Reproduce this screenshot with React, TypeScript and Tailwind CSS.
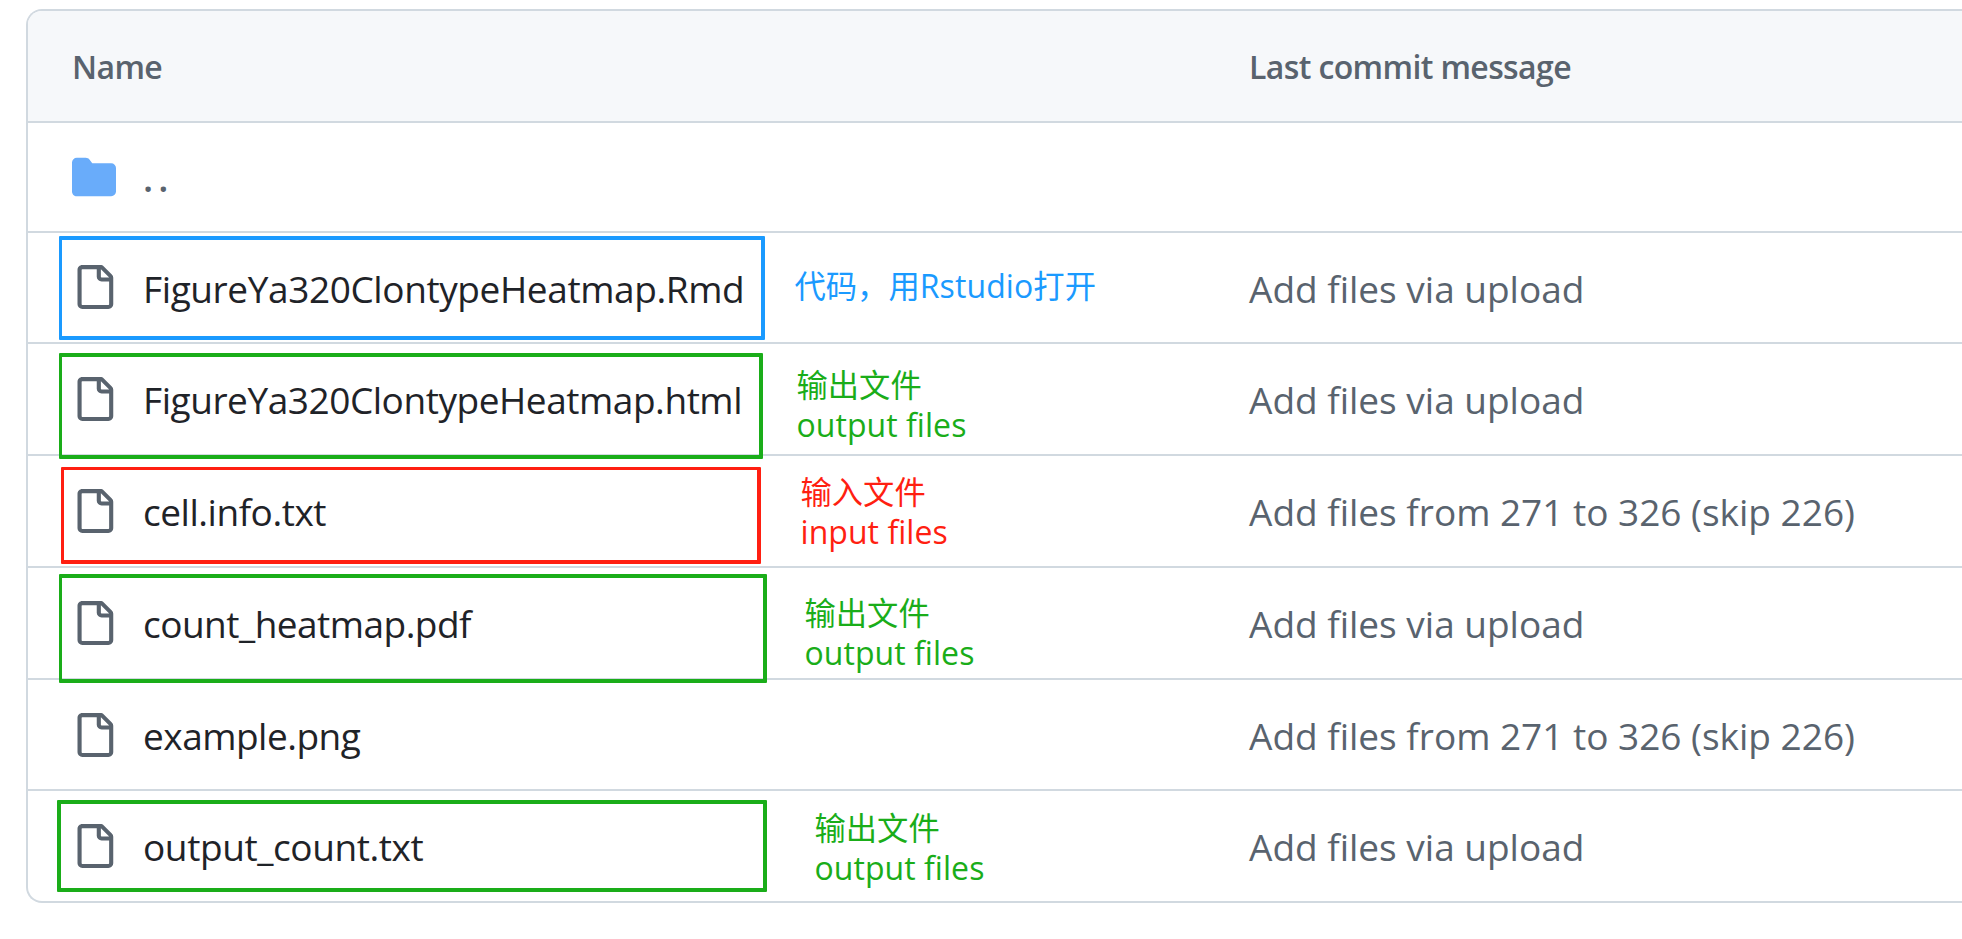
import React, { type ReactNode } from 'react';

type Row = {
  name: string;
  tracking: string;
  message: string;
  height: string;
  textPad: string;
  iconPad: string;
  frame?: string;
  note?: ReactNode;
  notePad?: string;
};

const UPLOAD = 'Add files via upload';
const RANGE = 'Add files from 271 to 326 (skip 226)';

const OUTPUT_NOTE = (
  <>
    <p>输出文件</p>
    <p className="text-[32px] tracking-[0.05px]">output files</p>
  </>
);

const INPUT_NOTE = (
  <>
    <p>输入文件</p>
    <p className="text-[32px] tracking-[0.05px]">input files</p>
  </>
);

const CODE_NOTE = (
  <p>
    代码，用<span className="text-[32px] tracking-[0.1px]">Rstudio</span>打开
  </p>
);

// Frames are drawn over the rows; some of them cross the divider below.
const rows: Row[] = [
  {
    name: 'FigureYa320ClontypeHeatmap.Rmd',
    tracking: 'tracking-[-0.4px]',
    message: UPLOAD,
    height: 'h-[111px]',
    textPad: 'pt-[30px]',
    iconPad: 'pt-[32px]',
    frame: 'top-[3px] left-[31px] h-[104px] w-[706px] border-4 border-l-3 border-[#1a9aff]',
    note: CODE_NOTE,
    notePad: 'pt-[33px] pl-[26.5px] text-[#1a9aff]',
  },
  {
    name: 'FigureYa320ClontypeHeatmap.html',
    tracking: 'tracking-[-0.45px]',
    message: UPLOAD,
    height: 'h-[112px]',
    textPad: 'pt-[30px]',
    iconPad: 'pt-[33px]',
    frame: 'top-[9px] left-[31px] h-[106px] w-[704px] border-4 border-l-3 border-[#1aad19]',
    note: OUTPUT_NOTE,
    notePad: 'pt-[21px] pl-[28.5px] text-[#1aad19]',
  },
  {
    name: 'cell.info.txt',
    tracking: 'tracking-[-0.47px]',
    message: RANGE,
    height: 'h-[112px]',
    textPad: 'pt-[30px]',
    iconPad: 'pt-[33px]',
    frame: 'top-[11px] left-[33px] h-[97px] w-[700px] border-4 border-t-3 border-l-3 border-[#ff1f11]',
    note: INPUT_NOTE,
    notePad: 'pt-[16px] pl-[32.5px] text-[#ff1f11]',
  },
  {
    name: 'count_heatmap.pdf',
    tracking: 'tracking-[-0.52px]',
    message: UPLOAD,
    height: 'h-[112px]',
    textPad: 'pt-[30px]',
    iconPad: 'pt-[33px]',
    frame: 'top-[6px] left-[31px] h-[109px] w-[708px] border-4 border-l-3 border-[#1aad19]',
    note: OUTPUT_NOTE,
    notePad: 'pt-[25px] pl-[36.5px] text-[#1aad19]',
  },
  {
    name: 'example.png',
    tracking: 'tracking-[-0.5px]',
    message: RANGE,
    height: 'h-[111px]',
    textPad: 'pt-[30px]',
    iconPad: 'pt-[33px]',
  },
  {
    name: 'output_count.txt',
    tracking: 'tracking-[-0.41px]',
    message: UPLOAD,
    height: 'h-[112px]',
    textPad: 'pt-[30px]',
    iconPad: 'pt-[33px]',
    frame: 'top-[9px] left-[29px] h-[92px] w-[710px] border-4 border-[#1aad19]',
    note: OUTPUT_NOTE,
    notePad: 'pt-[17px] pl-[46.5px] text-[#1aad19]',
  },
];

function FolderIcon() {
  return (
    <svg viewBox="0 0 16 16" className="size-11 fill-[#69acfa]" aria-hidden="true">
      <path d="M1.75 1A1.75 1.75 0 0 0 0 2.75v10.5C0 14.216.784 15 1.75 15h12.5A1.75 1.75 0 0 0 16 13.25v-8.5A1.75 1.75 0 0 0 14.25 3H7.5a.25.25 0 0 1-.2-.1l-.9-1.2C6.07 1.26 5.55 1 5 1H1.75Z" />
    </svg>
  );
}

function FileIcon() {
  return (
    <svg viewBox="0 0 16 16" className="size-11 fill-[#59636e]" aria-hidden="true">
      <path d="M2 1.75C2 .784 2.784 0 3.75 0h6.586c.464 0 .909.184 1.237.513l2.914 2.914c.329.328.513.773.513 1.237v9.586A1.75 1.75 0 0 1 13.25 16h-9.5A1.75 1.75 0 0 1 2 14.25Zm1.75-.25a.25.25 0 0 0-.25.25v12.5c0 .138.112.25.25.25h9.5a.25.25 0 0 0 .25-.25V6h-2.75A1.75 1.75 0 0 1 9 4.25V1.5Zm6.75.062V4.25c0 .138.112.25.25.25h2.688l-.011-.013-2.914-2.914-.013-.011Z" />
    </svg>
  );
}

function FileRow({ row }: { row: Row }) {
  return (
    <div className={`relative flex items-start border-t-2 border-[#d1d9e0] whitespace-nowrap ${row.height}`}>
      <div className="flex w-[740px] shrink-0 items-start gap-[27px] pl-11">
        <div className={`shrink-0 ${row.iconPad}`}>
          <FileIcon />
        </div>
        <div className={`text-[#1f2328] ${row.textPad} ${row.tracking}`}>{row.name}</div>
      </div>
      <div className={`w-[481px] shrink-0 text-[31.3px] leading-10 ${row.notePad ?? ''}`}>{row.note}</div>
      <div className={`tracking-[-0.01px] ${row.textPad}`}>{row.message}</div>
      {row.frame && <div className={`absolute z-10 rounded-[1px] ${row.frame}`} />}
    </div>
  );
}

export default function App() {
  return (
    <main className="h-[939px] w-full overflow-hidden bg-white pt-[9px] pl-[26px] font-['Open_Sans','Noto_Sans_CJK_SC',sans-serif] text-[37px] leading-[51px] text-[#59636e]">
      <div className="overflow-hidden rounded-l-2xl border-2 border-r-0 border-[#d1d9e0]">
        <div className="flex h-[110px] bg-[#f6f8fa] pt-[34px] text-[32px] leading-[44px] font-semibold tracking-[-0.62px]">
          <div className="w-[1221px] shrink-0 pl-11">Name</div>
          <div>Last commit message</div>
        </div>
        <div className="flex h-[110px] items-start gap-[27px] border-t-2 border-[#d1d9e0] pl-11">
          <div className="shrink-0 pt-8">
            <FolderIcon />
          </div>
          <div className="pt-[29px] font-semibold tracking-[5px]">..</div>
        </div>
        {rows.map((row) => (
          <FileRow key={row.name} row={row} />
        ))}
      </div>
    </main>
  );
}
